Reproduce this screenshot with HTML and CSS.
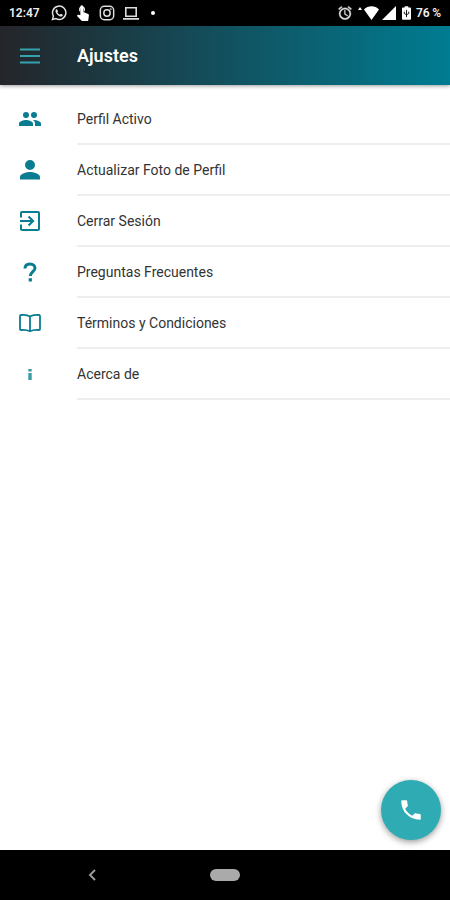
FILE: index.html
```
<!DOCTYPE html>
<html lang="es">
<head>
  <meta charset="UTF-8">
  <title>Ajustes</title>
  <meta name="viewport" content="width=device-width, initial-scale=1.0">
  <link rel="stylesheet" href="styles.css">
</head>
<body>
  <div class="status-bar">
    <span class="clock">12:47</span>
    <div class="notifications">
      <svg viewBox="0 0 24 24"><path fill="none" stroke="#e4e4e4" stroke-width="2.2" d="M2.2 21.8l1.4-5.2A10 10 0 1 1 7.4 20.4z"/><path fill="#e4e4e4" d="M8.9 6.4c-.5-.2-1 0-1.400.5C5.600 9 7.200 11.900 9.300 14.200c2.400 2.500 5.500 4.200 7.700 2.300.7-.6.9-1.500.6-1.900l-2.700-1.500-1.600 1.500c-1.700-.7-3-2-3.800-3.600l1.100-1.500z"/></svg>
      <svg viewBox="0 0 24 24"><path fill="#f4f4f4" d="M8 10.500V6.500a2.500 2.500 0 0 1 5 0v4c1.200-.8 2-2.200 2-3.800a4.500 4.500 0 0 0-9 0c0 1.600.8 3 2 3.800z"/><path fill="#fff" d="M8 2.500a2.300 2.300 0 0 1 4.600 0v8.500h1l6.200 2.600c.7.300 1.200 1 1.100 1.900l-.9 7c-.1.900-.8 1.500-1.700 1.500h-7.100c-.5 0-1-.2-1.300-.5L2.700 16.300l1.500-1.400c.3-.3.7-.4 1.200-.3l2.600.8z"/></svg>
      <svg viewBox="0 0 24 24" fill="none" stroke="#dcdcdc" stroke-width="2.200"><rect x="2" y="2" width="20" height="20" rx="6"/><circle cx="12" cy="12" r="4.800"/><circle cx="17.500" cy="6.500" r=".4"/></svg>
      <svg viewBox="0 0 24 24"><path fill="#dcdcdc" d="M3 3h18v15H3zM5.400 5.400v10.200h13.200V5.400zM0 19.500h24V22H0z" fill-rule="evenodd"/></svg>
      <span class="more-dot"></span>
    </div>
    <div class="system">
      <svg class="alarm" viewBox="0 0 24 24"><path fill="#dcdcdc" stroke="#dcdcdc" stroke-width=".5" d="M22 5.700l-4.600-3.900-1.300 1.500 4.600 3.900zM7.900 3.400L6.600 1.900 2 5.700l1.300 1.500zM12.500 8H11v6l4.700 2.900.8-1.300-4-2.300zM12 4a9 9 0 1 0 0 18 9 9 0 0 0 0-18zm0 15.800a6.800 6.800 0 1 1 0-13.600 6.800 6.800 0 0 1 0 13.600z"/></svg>
      <svg class="wifi" viewBox="0 0 22 14"><path fill="#fff" d="M0 4l2-3 2 3zM6 3.500C10-.8 17-.8 21 3.500L13.500 14z"/></svg>
      <svg class="signal" viewBox="0 0 14 14"><path fill="#fff" d="M14 0v14H0z"/></svg>
      <svg class="battery" viewBox="0 0 10 15"><path fill="#fff" d="M3 0h4v1.500h2q1 0 1 1V14q0 1-1 1H1q-1 0-1-1V2.500q0-1 1-1h2z"/><path stroke="#000" fill="none" d="M5 4v8M2.500 6v2L5 9.500 7.500 8V6"/></svg>
      <span class="percent">76&thinsp;%</span>
    </div>
  </div>

  <header class="toolbar">
    <button class="menu-btn" aria-label="Menú">
      <svg viewBox="0 0 24 24"><path stroke="#35a3ab" stroke-width="2" d="M2 5.500h20M2 12h20M2 18.500h20"/></svg>
    </button>
    <h1>Ajustes</h1>
  </header>

  <main>
    <ul class="settings">
      <li><a href="#perfil">
        <svg viewBox="0 0 24 24"><path d="M16 11a3 3 0 1 0 0-6 3 3 0 0 0 0 6zm-8 0a3 3 0 1 0 0-6 3 3 0 0 0 0 6zm0 2c-2.300 0-7 1.200-7 3.500V19h14v-2.500C15 14.200 10.300 13 8 13zm8 0l-1 .1c1.200.8 2 2 2 3.400V19h6v-2.500c0-2.300-4.700-3.500-7-3.500z"/></svg>
        <span>Perfil Activo</span></a></li>
      <li><a href="#foto">
        <svg viewBox="0 0 24 24"><path d="M12 12a5 5 0 1 0 0-10 5 5 0 0 0 0 10zm0 2c-3.300 0-10 1.600-10 5v2.500h20V19c0-3.400-6.700-5-10-5z"/></svg>
        <span>Actualizar Foto de Perfil</span></a></li>
      <li><a href="#salir">
        <svg viewBox="0 0 24 24"><path d="M9.800 15.800l1.500 1.500 5.300-5.300-5.300-5.300-1.500 1.500L12.600 11H2v2h10.600zM20 2H4a2 2 0 0 0-2 2v4.500h2V4h16v16H4v-4.500H2V20c0 1.100.9 2 2 2h16a2 2 0 0 0 2-2V4a2 2 0 0 0-2-2z"/></svg>
        <span>Cerrar Sesión</span></a></li>
      <li><a href="#preguntas">
        <svg viewBox="0 0 24 24"><path fill="none" stroke="#0b7d90" stroke-width="3" d="M7 8.500C7 5.500 9 4 12 4s5 1.700 5 4.300c0 3.200-4.700 3.700-4.700 7.700"/><path d="M10.700 18.200h3.200v3.300h-3.200z"/></svg>
        <span>Preguntas Frecuentes</span></a></li>
      <li><a href="#terminos">
        <svg viewBox="0 0 24 24"><path fill="none" stroke="#0b7d90" stroke-width="1.800" stroke-linejoin="round" d="M12 5.500C9.500 3.800 5.500 3.700 3 4q-1 .2-1 1v13q0 1 1 1c3-.3 6-.2 9 1.300 3-1.500 6-1.600 9-1.300q1 0 1-1V5q0-.8-1-1c-2.500-.3-6.500-.2-9 1.500zv14.500"/></svg>
        <span>Términos y Condiciones</span></a></li>
      <li><a href="#acerca">
        <svg viewBox="0 0 24 24"><path fill="#3d9ba8" d="M10.300 7h3.400v2.500h-3.400zM10.300 11h3.400v7h-3.400z"/></svg>
        <span>Acerca de</span></a></li>
    </ul>
    <button class="fab" aria-label="Llamar">
      <svg viewBox="0 0 24 24"><path fill="#fff" d="M6.600 10.800c1.400 2.800 3.800 5.100 6.600 6.600l2.200-2.200c.3-.3.700-.4 1-.2 1.100.4 2.300.6 3.600.6.600 0 1 .4 1 1V20c0 .6-.4 1-1 1A17 17 0 0 1 3 4c0-.6.500-1 1-1h3.500c.6 0 1 .4 1 1 0 1.300.2 2.500.6 3.600.1.300 0 .7-.2 1z"/></svg>
    </button>
  </main>

  <nav class="nav-bar">
    <button class="back" aria-label="Atrás">
      <svg viewBox="0 0 10 12"><path fill="none" stroke="#999" stroke-width="2" d="M8 1L3 6l5 5"/></svg>
    </button>
    <button class="home" aria-label="Inicio"></button>
    <span></span>
  </nav>
</body>
</html>
```
FILE: styles.css
```
* {
  box-sizing: border-box;
}

body {
  margin: 0;
  min-height: 100vh;
  display: flex;
  flex-direction: column;
  font-family: Roboto, "Liberation Sans", sans-serif;
  background: #fff;
  color: #333;
}

svg {
  display: block;
  flex: none;
}

button {
  padding: 0;
  border: 0;
  background: none;
  cursor: pointer;
}

.status-bar {
  display: flex;
  align-items: center;
  height: 26px;
  padding: 0 9px;
  background: #000;
  color: #eee;
  font-size: 12px;
  font-weight: 600;
}

.clock {
  width: 34px;
}

.notifications {
  display: flex;
  align-items: center;
  gap: 8px;
  margin-left: 8px;
}

.notifications svg {
  width: 16px;
  height: 16px;
}

.more-dot {
  width: 4px;
  height: 4px;
  margin-left: 4px;
  border-radius: 50%;
  background: #fff;
}

.system {
  display: flex;
  align-items: center;
  margin-left: auto;
}

.alarm {
  width: 16px;
  height: 16px;
  margin-right: 5px;
}

.wifi {
  width: 22px;
  height: 14px;
  margin-right: 2px;
}

.signal {
  width: 14px;
  height: 14px;
  margin-right: 6px;
}

.battery {
  width: 9px;
  height: 14px;
  margin-right: 5px;
}

.toolbar {
  display: flex;
  align-items: center;
  gap: 35px;
  height: 59px;
  padding: 0 18px;
  background: linear-gradient(to right, #24252a, #007c92);
  box-shadow: 0 1px 4px rgba(0, 0, 0, 0.4);
}

.menu-btn svg {
  width: 24px;
  height: 24px;
}

.toolbar h1 {
  margin: 0;
  font-size: 18px;
  font-weight: 600;
  color: #fff;
}

main {
  position: relative;
  flex: 1;
}

.settings {
  margin: 0;
  padding: 9px 0 0;
  list-style: none;
}

.settings a {
  display: flex;
  gap: 35px;
  padding-left: 18px;
  align-items: center;
  color: inherit;
  font-size: 14px;
  text-decoration: none;
}

.settings svg {
  width: 24px;
  height: 24px;
  margin-bottom: 2px;
  fill: #0b7d90;
}

.settings span {
  flex: 1;
  height: 51px;
  line-height: 50px;
  border-bottom: 2px solid #eee;
}

.fab {
  position: absolute;
  right: 9px;
  bottom: 10px;
  display: flex;
  align-items: center;
  justify-content: center;
  width: 60px;
  height: 60px;
  border-radius: 50%;
  background: #2eabb3;
  box-shadow: 0 2px 6px rgba(0, 0, 0, 0.4);
}

.fab svg {
  width: 26px;
  height: 26px;
}

.nav-bar {
  display: grid;
  grid-template-columns: 1fr 30px 1fr;
  align-items: center;
  height: 50px;
  background: #000;
}

.back {
  justify-self: center;
  margin-right: 26px;
}

.back svg {
  width: 10px;
  height: 12px;
}

.home {
  height: 12px;
  border-radius: 6px;
  background: #aaa;
}
```
